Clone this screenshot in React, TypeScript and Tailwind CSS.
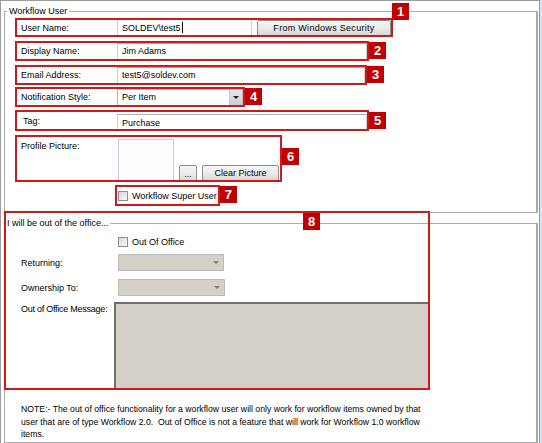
import type { ReactNode } from "react";

function Badge({ n, className }: { n: number; className: string }) {
  return (
    <span
      className={`absolute z-10 flex h-[17px] w-[17px] items-center justify-center bg-[#c00000] text-[13px] font-bold leading-none text-white ${className}`}
    >
      {n}
    </span>
  );
}

// red annotation frame drawn over a row
function Mark({ className = "inset-0" }: { className?: string }) {
  return <span className={`pointer-events-none absolute z-10 border-2 border-[#cc1a1a] ${className}`} />;
}

function TextBox({ value, className, cursor }: { value: string; className: string; cursor?: boolean }) {
  return (
    <div className={`flex h-[17px] items-center border border-[#cfd1d6] border-t-[#a9acb3] bg-white pl-[4px] ${className}`}>
      <span>{value}</span>
      {cursor && <span className="ml-px h-[11px] w-px bg-black" />}
    </div>
  );
}

function Button({ children, className }: { children: ReactNode; className: string }) {
  return (
    <div
      className={`flex items-center justify-center rounded-[2px] border border-[#8e8f8f] bg-linear-to-b from-[#f5f5f5] via-[#ebebeb] to-[#d8d8d8] ${className}`}
    >
      {children}
    </div>
  );
}

function Check() {
  return <span className="h-[10px] w-[10px] shrink-0 border border-[#8e8f8f] bg-linear-to-br from-[#d5d8de] to-[#f8f8f8]" />;
}

function Arrow({ color }: { color: string }) {
  return <span className={`h-0 w-0 border-x-[3px] border-t-[3px] border-x-transparent ${color}`} />;
}

function DisabledSelect({ className }: { className: string }) {
  return (
    <div className={`flex h-[17px] items-center justify-end border border-[#b9bcc4] bg-[#d4d0c8] pr-[4px] ${className}`}>
      <Arrow color="border-t-[#7d7d7d]" />
    </div>
  );
}

export default function App() {
  return (
    <div className="h-[443px] w-[542px] overflow-hidden border-r-2 border-[#d3e2f4] bg-white font-['Liberation_Sans',Arial,sans-serif] text-[9px] leading-[12px] text-black">
      <div className="flex h-full flex-col border-t border-r border-l border-[#9c9c9c] pr-px pl-[3px]">
        {/* Workflow User */}
        <fieldset className="mt-[4px] border border-r-2 border-[#ababab]">
          <legend className="ml-[2px] px-[2px]">Workflow User</legend>
          <div className="flex flex-col pt-px pb-[6px] pl-[10px]">
            <div className="relative flex w-fit items-center py-px pr-[2px]">
              <span className="w-[102px] pl-[6px]">User Name:</span>
              <TextBox value={"SOLDEV\\test5"} cursor className="w-[135px]" />
              <Button className="ml-[5px] h-[16px] w-[134px] tracking-[0.3px]">From Windows Security</Button>
              <Mark />
              <Badge n={1} className="top-[-15px] left-[377px]" />
            </div>

            <div className="relative mt-[4px] flex h-[20px] w-fit items-center pr-[2px]">
              <span className="w-[102px] pl-[6px]">Display Name:</span>
              <TextBox value="Jim Adams" className="w-[250px]" />
              <Mark />
              <Badge n={2} className="top-px left-full" />
            </div>

            <div className="relative mt-[4px] flex h-[20px] w-fit items-center pr-[2px]">
              <span className="w-[102px] pl-[6px]">Email Address:</span>
              <TextBox value="test5@soldev.com" className="w-[248px]" />
              <Mark />
              <Badge n={3} className="top-px left-full" />
            </div>

            <div className="relative mt-[2px] flex h-[20px] w-fit items-center pr-[2px]">
              <span className="w-[102px] pl-[6px]">Notification Style:</span>
              <div className="flex h-[17px] w-[126px] items-center border border-[#b5b7bd] bg-white pl-[4px]">
                <span className="flex-1">Per Item</span>
                <span className="flex h-full w-[13px] items-center justify-center border-l border-[#c4c4c4] bg-linear-to-b from-[#e6e6e6] to-[#cfcfcf]">
                  <Arrow color="border-t-[#1e1e1e]" />
                </span>
              </div>
              <Mark />
              <Badge n={4} className="top-px left-full" />
            </div>

            <div className="relative mt-[3px] flex h-[21px] w-fit items-center pr-[2px]">
              <span className="w-[102px] pl-[8px]">Tag:</span>
              <TextBox value="Purchase" className="w-[250px] self-end" />
              <Mark />
              <Badge n={5} className="top-[2px] left-full" />
            </div>

            <div className="relative mt-[4px] flex h-[47px] w-fit items-start pr-[3px]">
              <span className="mt-[5px] w-[102px] pl-[6px]">Profile Picture:</span>
              <div className="mt-[4px] ml-px h-[43px] w-[56px] border border-[#cbcbe4] bg-[#fdfdff]" />
              <Button className="ml-[5px] h-[17px] w-[18px] self-end">...</Button>
              <Button className="mb-px ml-[5px] h-[16px] w-[77px] self-end">Clear Picture</Button>
              <Mark />
              <Badge n={6} className="top-[13px] left-full" />
            </div>

            <div className="relative mt-[3px] ml-[100px] flex h-[21px] w-fit items-center gap-[4px] px-[3px]">
              <Check />
              <span>Workflow Super User</span>
              <Mark />
              <Badge n={7} className="top-px left-full" />
            </div>
          </div>
        </fieldset>

        {/* Out of office */}
        <fieldset className="mt-[4px] flex-1 border border-r-2 border-[#ababab]">
          <legend className="px-[2px]">I will be out of the office...</legend>
          <div className="relative flex flex-col pl-[16px]">
            <div className="mt-[8px] ml-[97px] flex h-[10px] items-center gap-[4px]">
              <Check />
              <span>Out Of Office</span>
            </div>

            <div className="mt-[7px] flex items-center">
              <span className="w-[97px]">Returning:</span>
              <DisabledSelect className="w-[106px]" />
            </div>

            <div className="mt-[8px] flex items-center">
              <span className="w-[97px]">Ownership To:</span>
              <DisabledSelect className="w-[107px]" />
            </div>

            <div className="mt-[6px] flex items-start">
              <span className="mt-px w-[93px] tracking-[-0.25px]">Out of Office Message:</span>
              <div className="h-[88px] w-[316px] border-t-2 border-l-2 border-[#6f6f6f] bg-[#d4d0c8]" />
            </div>

            <p className="mt-[13px] text-[8.7px] leading-[12.5px] whitespace-nowrap">
              NOTE:- The out of office functionality for a workflow user will only work for workflow items owned by that
              <br />
              user that are of type Workflow 2.0.&nbsp; Out of Office is not a feature that will work for Workflow 1.0 workflow
              <br />
              items.
            </p>

            <Mark className="top-[-18px] left-[-1px] h-[179px] w-[426px]" />
            <Badge n={8} className="top-[-16px] left-[298px]" />
          </div>
        </fieldset>
      </div>
    </div>
  );
}
